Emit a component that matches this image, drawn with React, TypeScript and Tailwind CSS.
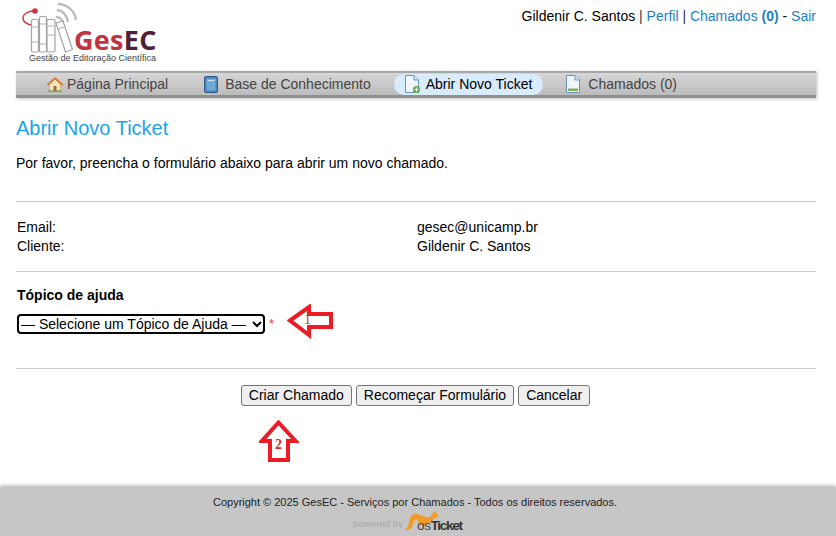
import React from 'react';

const Logo = () => (
  <div className="relative w-[160px] h-[65px]">
    <svg width="90" height="56" viewBox="0 0 90 56" className="absolute left-0 top-0">
      {/* wifi arcs */}
      <g fill="none" stroke="#bdbdbd" strokeWidth="2.4">
        <path d="M57 10 C62 10 67 15 68 22" />
        <path d="M58 4 C67 4 75 11 76 20" />
        <path d="M56 17 C59 17 62 19 63 23" />
      </g>
      {/* orbit */}
      <path d="M34 11 C28 11 23 14 23 18 C23 22 27 24 31 25" fill="none" stroke="#d2333f" strokeWidth="1.4" />
      <circle cx="35" cy="11" r="2.8" fill="#d2333f" />
      {/* books */}
      <g fill="#fff" stroke="#a3a3a3" strokeWidth="1.2">
        <rect x="31.5" y="19.5" width="7" height="32.5" rx="1.5" />
        <rect x="39.5" y="16.5" width="7" height="35.5" rx="1.5" />
        <rect x="47" y="19.5" width="8" height="32.5" rx="1.5" />
        <path d="M56 23 L63 21 L72.5 49.5 L65.5 52 Z" />
      </g>
      <g stroke="#b0b0b0" strokeWidth="1">
        <path d="M32 27 H38 M32 42 H38 M40 24 H46 M40 44 H46 M47.5 26 H54.5 M47.5 35 H54.5 M58 29 L64 27" />
      </g>
    </svg>
    <div className="absolute left-[74px] top-[28px] text-[27px] leading-[24px] font-bold tracking-[0.3px] font-['Open_Sans',sans-serif] text-[#c0343f]">
      Ges<span className="text-[#4e2138]">EC</span>
    </div>
    <div className="absolute left-[29px] top-[53px] text-[9px] leading-[11px] whitespace-nowrap text-[#444]">
      Gestão de Editoração Científica
    </div>
  </div>
);

const HomeIcon = () => (
  <svg width="18" height="16" viewBox="0 0 18 16">
    <path d="M3.5 8 V15 H14.5 V8 L9 3 Z" fill="#f3e3c0" stroke="#b79a68" strokeWidth="0.7" />
    <rect x="7.5" y="10" width="3" height="5" fill="#9a6a32" />
    <path d="M0.5 8.5 L9 1 L17.5 8.5 L15.8 9.5 L9 3.6 L2.2 9.5 Z" fill="#d8792c" />
    <path d="M2 15.2 H16" stroke="#6aa84a" strokeWidth="1.2" />
  </svg>
);

const BookIcon = () => (
  <svg width="14" height="17" viewBox="0 0 14 17">
    <rect x="0.5" y="0.5" width="13" height="16" rx="1.5" fill="#4a86ba" stroke="#2f5a85" />
    <rect x="2.5" y="2.5" width="9" height="12" fill="#6ea8d4" />
    <path d="M3.5 4.5 H10.5" stroke="#cfe2f1" strokeWidth="1.2" />
  </svg>
);

const DocIcon = ({ plus }: { plus?: boolean }) => (
  <svg width="16" height="18" viewBox="0 0 16 18">
    <path d="M1.5 0.5 H10 L14.5 5 V17.5 H1.5 Z" fill="#eef5fb" stroke="#6c94bb" />
    <path d="M10 0.5 V5 H14.5" fill="#d2e3f1" stroke="#6c94bb" />
    {plus ? (
      <g>
        <circle cx="12.5" cy="14.5" r="3.5" fill="#64a644" />
        <path d="M10.5 14.5 H14.5 M12.5 12.5 V16.5" stroke="#fff" strokeWidth="1.2" />
      </g>
    ) : (
      <rect x="3" y="13.5" width="10" height="2.5" fill="#7fae58" />
    )}
  </svg>
);

const ArrowLeft = () => (
  <svg width="48" height="36" viewBox="0 0 48 36">
    <path d="M3 16.5 L22 3 V10 H44 V23 H22 V31 Z" fill="#fff" stroke="#ed1c24" strokeWidth="4" />
  </svg>
);

const ArrowUp = () => (
  <svg width="40" height="44" viewBox="0 0 40 44">
    <path d="M19.5 2.5 L36.5 21 H29 V40 H11 V21 H3 Z" fill="#fff" stroke="#ed1c24" strokeWidth="4" />
  </svg>
);

const Kangaroo = () => (
  <svg width="35" height="20" viewBox="0 0 35 20">
    <path d="M0 19 C3 19 4 18 5 12 C6 6 9 3 13 4 C18 5 22 8 26 7 L29 3 L31 0 L32 3 L35 6 L31 8 C28 11 25 13 22 14 L20 17 L15 14 L13 9 C10 10 9 14 8 17 C7 19 5 20 2 20 Z" fill="#f09a2a" />
  </svg>
);

const navLink = 'flex items-center h-[21px] pl-[10px] pr-[11px] rounded-[11px] text-[#444]';

export default function App() {
  return (
    <div className="w-[836px] h-[536px] bg-white flex flex-col text-[14px] leading-[19px] text-black font-['Liberation_Sans',Arial,sans-serif] overflow-hidden">
      {/* header */}
      <div className="h-[71px] flex justify-between pr-[20px]">
        <Logo />
        <div className="pt-[7px]">
          Gildenir C. Santos <span className="text-[#333]">|</span>{' '}
          <span className="text-[#1b7fc4]">Perfil</span> <span className="text-[#333]">|</span>{' '}
          <span className="text-[#1b7fc4]">Chamados <b>(0)</b></span> - <span className="text-[#1b7fc4]">Sair</span>
        </div>
      </div>

      {/* nav */}
      <div className="ml-[16px] mr-[20px] h-[27px] shrink-0 flex items-center pl-[20px] gap-[12px] border-t-2 border-b-[3px] border-t-[#a8a8a8] border-b-[#8f8f8f] bg-gradient-to-b from-[#d6d6d6] to-[#bcbcbc] shadow-[1px_1px_3px_rgba(0,0,0,0.25)]">
        <div className={navLink}><HomeIcon /><span className="ml-[3px] mr-[3px]">Página Principal</span></div>
        <div className={navLink}><BookIcon /><span className="ml-[7px]">Base de Conhecimento</span></div>
        <div className={`${navLink} bg-[#d8ecfd] !text-black`}><DocIcon plus /><span className="ml-[6px]">Abrir Novo Ticket</span></div>
        <div className={navLink}><DocIcon /><span className="ml-[7px]">Chamados (0)</span></div>
      </div>

      {/* content */}
      <div className="flex-1 pl-[16px] pr-[20px] relative">
        <h1 className="mt-[18px] text-[20px] leading-[24px] text-[#1ca4e8]">Abrir Novo Ticket</h1>
        <p className="mt-[14px]">Por favor, preencha o formulário abaixo para abrir um novo chamado.</p>

        <div className="mt-[28px] border-t border-[#ccc] pt-[16px] pl-[1px] grid grid-cols-[400px_1fr]">
          <div>Email:</div>
          <div>gesec@unicamp.br</div>
          <div>Cliente:</div>
          <div>Gildenir C. Santos</div>
        </div>

        <div className="mt-[15px] border-t border-[#ccc] pt-[14px] pl-[1px]">
          <div className="font-bold">Tópico de ajuda</div>
          <div className="mt-[9px] h-[19px] flex items-center gap-[4px]">
            <select className="w-[248px] h-[20px] border-0 outline-2 -outline-offset-2 outline-black rounded-[4px] bg-white text-[14px] leading-normal">
              <option>— Selecione um Tópico de Ajuda —</option>
            </select>
            <span className="text-[#e33] text-[13px]">*</span>
          </div>
          <div className="absolute left-[287px] top-[206px]">
            <ArrowLeft />
            <span className="absolute left-[17px] top-[8px] text-[14px] leading-[16px] text-[#c0392b] font-['Liberation_Serif',serif]">1</span>
          </div>
        </div>

        <div className="mt-[35px] border-t border-[#ccc] pt-[16px] flex justify-center gap-[4px] pr-[1px]">
          <button className="h-[21px] px-[7px] bg-[#efefef] border border-[#767676] rounded-[3px]">Criar Chamado</button>
          <button className="h-[21px] px-[7px] bg-[#efefef] border border-[#767676] rounded-[3px]">Recomeçar Formulário</button>
          <button className="h-[21px] px-[7px] bg-[#efefef] border border-[#767676] rounded-[3px]">Cancelar</button>
        </div>

        <div className="absolute left-[259px] top-[322px]">
          <ArrowUp />
          <span className="absolute left-[16px] top-[17px] text-[14px] leading-[16px] font-bold text-[#d9262c] font-['Liberation_Serif',serif]">2</span>
        </div>
      </div>

      {/* footer */}
      <div className="h-[49px] shrink-0 bg-[#c6c6c6] shadow-[0_-1px_4px_rgba(0,0,0,0.35)] flex flex-col items-center pt-[8px] pr-[6px]">
        <div className="text-[11px] leading-[15px] text-[#222]">Copyright © 2025 GesEC - Serviços por Chamados - Todos os direitos reservados.</div>
        <div className="relative w-[110px] h-[26px] mr-[14px]">
          <span className="absolute left-0 top-[6px] text-[9.7px] leading-[16px] text-[#a8a8a8] whitespace-nowrap">powered by</span>
          <div className="absolute left-[51px] top-0"><Kangaroo /></div>
          <span className="absolute left-[64px] top-[7px] text-[13.5px] leading-[17px] text-[#444] tracking-[-0.3px] whitespace-nowrap">os<span className="font-bold text-[#333] tracking-[-1.3px]">Ticket</span></span>
        </div>
      </div>
    </div>
  );
}
